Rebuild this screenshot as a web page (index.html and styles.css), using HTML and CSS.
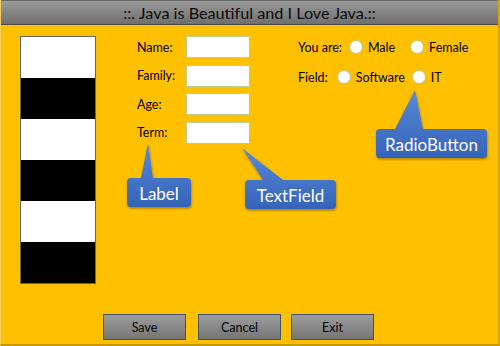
FILE: index.html
```html
<!DOCTYPE html>
<html>
<head>
<meta charset="utf-8">
<link rel="stylesheet" href="styles.css">
</head>
<body>
<div class="window">
  <div class="titlebar">::. Java is Beautiful and I Love Java.::</div>
  <div class="content">
    <div class="picture">
      <div class="stripe white"></div>
      <div class="stripe black"></div>
      <div class="stripe white"></div>
      <div class="stripe black"></div>
      <div class="stripe white"></div>
      <div class="stripe black"></div>
    </div>
    <div class="form">
      <label class="lbl">Name:</label><div class="field"></div>
      <label class="lbl">Family:</label><div class="field"></div>
      <label class="lbl">Age:</label><div class="field"></div>
      <label class="lbl">Term:</label><div class="field"></div>
    </div>
    <div class="choices">
      <div class="choice-row">
        <span class="cap cap-you">You are:</span>
        <span class="radio"></span><span class="opt opt-male">Male</span>
        <span class="radio"></span><span class="opt">Female</span>
      </div>
      <div class="choice-row">
        <span class="cap cap-field">Field:</span>
        <span class="radio"></span><span class="opt opt-soft">Software</span>
        <span class="radio"></span><span class="opt">IT</span>
      </div>
    </div>
  </div>
  <div class="buttons">
    <div class="btn btn-save">Save</div>
    <div class="btn btn-cancel">Cancel</div>
    <div class="btn">Exit</div>
  </div>

  <svg class="callout callout-label" width="80" height="72" viewBox="0 0 80 72">
    <defs>
      <linearGradient id="g1" x1="0" y1="0" x2="0" y2="1">
        <stop offset="0" stop-color="#5a8ad8"/>
        <stop offset="1" stop-color="#3563b8"/>
      </linearGradient>
      <filter id="sh" x="-20%" y="-20%" width="140%" height="150%">
        <feDropShadow dx="0.5" dy="1.5" stdDeviation="1.2" flood-color="#000" flood-opacity="0.35"/>
      </filter>
    </defs>
    <path d="M11 38 L21 38 L28 3 L33 38 L67 38 Q71 38 71 42 L71 63 Q71 67 67 67 L11 67 Q7 67 7 63 L7 42 Q7 38 11 38 Z" fill="url(#g1)" filter="url(#sh)"/>
    <text x="39" y="53" class="ctext">Label</text>
  </svg>

  <svg class="callout callout-text" width="104" height="70" viewBox="0 0 104 70">
    <path d="M11 36 L25 36 L4 4 L45 36 L94 36 Q98 36 98 40 L98 61 Q98 65 94 65 L11 65 Q7 65 7 61 L7 40 Q7 36 11 36 Z" fill="url(#g1)" filter="url(#sh)"/>
    <text x="52.5" y="51" class="ctext">TextField</text>
  </svg>

  <svg class="callout callout-radio" width="124" height="78" viewBox="0 0 124 78">
    <path d="M10 43 L25 43 L45 4 L53 43 L113 43 Q117 43 117 47 L117 68 Q117 72 113 72 L10 72 Q6 72 6 68 L6 47 Q6 43 10 43 Z" fill="url(#g1)" filter="url(#sh)"/>
    <text x="61.5" y="58" class="ctext">RadioButton</text>
  </svg>
</div>
</body>
</html>
```

FILE: styles.css
```css
html, body {
  margin: 0;
  padding: 0;
}

body {
  font-family: Lato, "Open Sans", sans-serif;
  color: #000;
}

.window {
  position: relative;
  width: 500px;
  height: 346px;
  box-sizing: border-box;
  background: #ffc000;
  border-left: 1px solid #f4d060;
  border-right: 2px solid #d9a300;
  border-bottom: 2px solid #c99800;
  display: flex;
  flex-direction: column;
  overflow: hidden;
}

.titlebar {
  height: 25px;
  box-sizing: border-box;
  border-top: 1px solid #6a6a6a;
  border-bottom: 1px solid #4a4a4a;
  background: linear-gradient(#999999, #6f6f6f);
  text-align: center;
  font-size: 16.2px;
  line-height: 23px;
  color: #0a0a0a;
}

.content {
  display: flex;
  align-items: flex-start;
  padding: 11px 0 0 19px;
}

.picture {
  width: 76px;
  box-sizing: border-box;
  border: 1px solid #666;
  display: flex;
  flex-direction: column;
}

.stripe {
  height: 41px;
}

.stripe.white { background: #fff; }
.stripe.black { background: #000; }

.form {
  margin-left: 41px;
  display: grid;
  grid-template-columns: 49px 64px;
  grid-auto-rows: 22px;
  row-gap: 6.5px;
  align-items: center;
  font-size: 12.5px;
}

.field {
  height: 22px;
  box-sizing: border-box;
  background: #fff;
  border: 1px solid #b9cf8e;
}

.choices {
  margin-left: 48px;
  display: flex;
  flex-direction: column;
  row-gap: 8px;
  font-size: 12.5px;
}

.choice-row {
  height: 22px;
  display: flex;
  align-items: center;
}

.cap-you { margin-right: 7px; }
.cap-field { margin-right: 9px; }

.radio {
  width: 14px;
  height: 14px;
  box-sizing: border-box;
  border-radius: 50%;
  border: 1px solid #b7c99a;
  background: radial-gradient(circle at 50% 40%, #ffffff 55%, #eef2e6 100%);
  margin-right: 5px;
  flex: none;
}

.opt-male { margin-right: 15px; }
.opt-soft { margin-right: 7px; }

.buttons {
  margin-top: 30px;
  padding-left: 102px;
  display: flex;
  font-size: 12.5px;
}

.btn {
  width: 83px;
  height: 26px;
  box-sizing: border-box;
  border: 1px solid #45506a;
  background: linear-gradient(#9d9d9d, #757575);
  display: flex;
  align-items: center;
  justify-content: center;
  color: #000;
}

.btn-save { margin-right: 12px; }
.btn-cancel { margin-right: 10px; }

.callout {
  position: absolute;
  overflow: visible;
}

.callout-label { left: 119px; top: 140px; }
.callout-text { left: 237px; top: 144px; }
.callout-radio { left: 369px; top: 86px; }

.ctext {
  font-family: Lato, "Open Sans", sans-serif;
  font-size: 17px;
  fill: #fff;
  text-anchor: middle;
  dominant-baseline: central;
}
```
